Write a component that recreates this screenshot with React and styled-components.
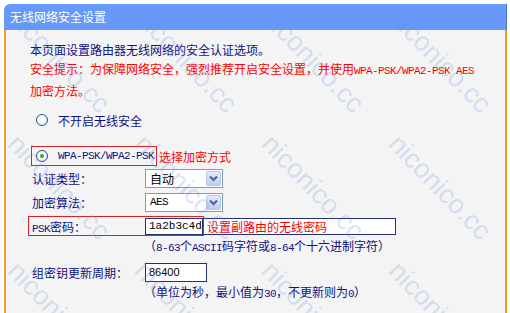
import styled, { createGlobalStyle } from 'styled-components';

const GlobalStyle = createGlobalStyle`
  html, body { margin: 0; padding: 0; background: #fff; }
  body {
    font-family: "Noto Sans CJK SC", "Liberation Sans", sans-serif;
    font-size: 12px;
  }
`;

const Page = styled.div`
  position: relative;
  height: 313px;
  padding: 4px 3px 0 4px;
  box-sizing: border-box;
  overflow: hidden;
`;

const Panel = styled.div`
  display: flex;
  flex-direction: column;
  height: 100%;
`;

const Header = styled.div`
  height: 26px;
  line-height: 26px;
  padding-left: 6px;
  background: #6699fb;
  border-top-left-radius: 6px;
  border-right: 1px solid #4f73c4;
  color: #fff;
  font-size: 12px;
`;

const Body = styled.div`
  flex: 1;
  background: #f4f4f4;
  border-left: 2px solid #f0a030;
  border-right: 2px solid #e89a2c;
`;

const Intro = styled.div`
  padding: 10px 0 0 24px;
  line-height: 19px;
`;

const Line = styled.div`
  color: ${p => (p.$warn ? '#f00' : '#101080')};
`;

// SimSun-like half-width Latin: 6px per character
const Mono = styled.span`
  font-family: "Liberation Mono", monospace;
  font-size: ${p => p.$size || 11}px;
  letter-spacing: ${p => (p.$size ? 0 : -0.6)}px;
`;

const RadioRow = styled.div`
  display: flex;
  align-items: center;
  height: 20px;
  margin-top: ${p => p.$top}px;
  padding-left: ${p => (p.$boxed ? 0 : 30)}px;
  color: #101080;
`;

const Radio = styled.span`
  position: relative;
  width: 10px;
  height: 10px;
  border: 1px solid #1c5180;
  border-radius: 50%;
  background: radial-gradient(circle at 40% 40%, #fff 40%, #dfe4ea 100%);
  margin-right: 10px;
  flex: none;
  &::after {
    content: '';
    display: ${p => (p.$checked ? 'block' : 'none')};
    position: absolute;
    left: 3px;
    top: 3px;
    width: 4px;
    height: 4px;
    border-radius: 50%;
    background: #2fa82f;
  }
`;

const MarkBox = styled.div`
  display: flex;
  align-items: center;
  height: 18px;
  margin-left: 25px;
  padding: 0 2px 0 4px;
  border: 1px solid #e02020;
  color: #101080;
`;

const Note = styled.span`
  color: #f00;
  margin-left: 2px;
`;

const FormRow = styled.div`
  display: flex;
  align-items: center;
  height: 24px;
  margin-top: ${p => p.$top || 0}px;
  padding-left: 26px;
  color: #101080;
`;

const Label = styled.span`
  width: 113px;
  flex: none;
`;

const Hint = styled.div`
  height: 16px;
  line-height: 16px;
  padding-left: 138px;
  color: #101080;
`;

const Select = styled.div`
  display: flex;
  align-items: center;
  justify-content: space-between;
  width: 78px;
  height: 19px;
  box-sizing: border-box;
  border: 1px solid #7f9db9;
  background: #fff;
  padding-left: 4px;
  color: #000;
`;

const Arrow = styled.span`
  display: flex;
  align-items: center;
  justify-content: center;
  width: 15px;
  height: 15px;
  margin-right: 1px;
  border: 1px solid #b6c8ee;
  border-radius: 2px;
  box-sizing: border-box;
  background: linear-gradient(#e3ebfc, #bccdf3);
`;

const PskBox = styled.div`
  display: flex;
  align-items: center;
  height: 18px;
  margin-left: -4px;
  padding-left: 3px;
  border: 1px solid #e02020;
`;

const TextInput = styled.div`
  display: flex;
  align-items: center;
  width: ${p => p.$w}px;
  height: ${p => p.$h || 17}px;
  box-sizing: border-box;
  border: 1px solid #25307a;
  background: #fff;
  padding-left: 3px;
  color: #000;
  font-family: ${p => (p.$mono ? '"Liberation Mono", monospace' : '"Liberation Sans", sans-serif')};
  font-size: 11px;
`;

const Remark = styled.div`
  display: flex;
  align-items: center;
  width: 192px;
  height: 17px;
  box-sizing: border-box;
  border: 1px solid #25307a;
  border-left: none;
  background: #fff;
  padding-left: 3px;
  color: #f00;
`;

const Watermark = styled.div`
  position: absolute;
  inset: 0;
  overflow: hidden;
  pointer-events: none;
`;

const Mark = styled.span`
  position: absolute;
  transform: rotate(46deg);
  transform-origin: 0 0;
  font-family: "Liberation Sans", sans-serif;
  font-size: 27px;
  line-height: 1;
  white-space: nowrap;
  color: rgba(90, 140, 225, 0.24);
`;

function Chevron() {
  return (
    <svg width="9" height="7" viewBox="0 0 9 7">
      <path d="M1 1.5 L4.5 5 L8 1.5" fill="none" stroke="#4d6185" strokeWidth="2" />
    </svg>
  );
}

const marks = [];
for (let j = -1; j < 3; j++) {
  for (let i = -1; i < 4; i++) {
    marks.push({ left: 22 + 127 * i, top: 3 + 127 * j });
  }
}

function App() {
  return (
    <Page>
      <GlobalStyle />
      <Panel>
        <Header>无线网络安全设置</Header>
        <Body>
          <Intro>
            <Line>本页面设置路由器无线网络的安全认证选项。</Line>
            <Line $warn>
              安全提示：为保障网络安全，强烈推荐开启安全设置，并使用<Mono>WPA-PSK/WPA2-PSK AES</Mono>
            </Line>
            <Line $warn>加密方法。</Line>
          </Intro>

          <RadioRow $top={10}>
            <Radio />
            不开启无线安全
          </RadioRow>

          <RadioRow $top={16} $boxed>
            <MarkBox>
              <Radio $checked />
              <Mono>WPA-PSK/WPA2-PSK</Mono>
            </MarkBox>
            <Note>选择加密方式</Note>
          </RadioRow>

          <FormRow>
            <Label>认证类型：</Label>
            <Select>
              自动
              <Arrow><Chevron /></Arrow>
            </Select>
          </FormRow>
          <FormRow>
            <Label>加密算法：</Label>
            <Select>
              <Mono>AES</Mono>
              <Arrow><Chevron /></Arrow>
            </Select>
          </FormRow>
          <FormRow>
            <PskBox>
              <Label>
                <Mono>PSK</Mono>密码：
              </Label>
              <TextInput $w={58} $mono>1a2b3c4d</TextInput>
            </PskBox>
            <Remark>设置副路由的无线密码</Remark>
          </FormRow>
          <Hint>
            （<Mono>8-63</Mono>个<Mono>ASCII</Mono>码字符或<Mono>8-64</Mono>个十六进制字符）
          </Hint>
          <FormRow $top={6}>
            <Label>组密钥更新周期：</Label>
            <TextInput $w={62} $h={19}>86400</TextInput>
          </FormRow>
          <Hint>
            （单位为秒，最小值为<Mono>30</Mono>，不更新则为<Mono>0</Mono>）
          </Hint>
        </Body>
      </Panel>
      <Watermark>
        {marks.map((m, k) => (
          <Mark key={k} style={{ left: m.left, top: m.top }}>niconico.cc</Mark>
        ))}
      </Watermark>
    </Page>
  );
}

export default App;
